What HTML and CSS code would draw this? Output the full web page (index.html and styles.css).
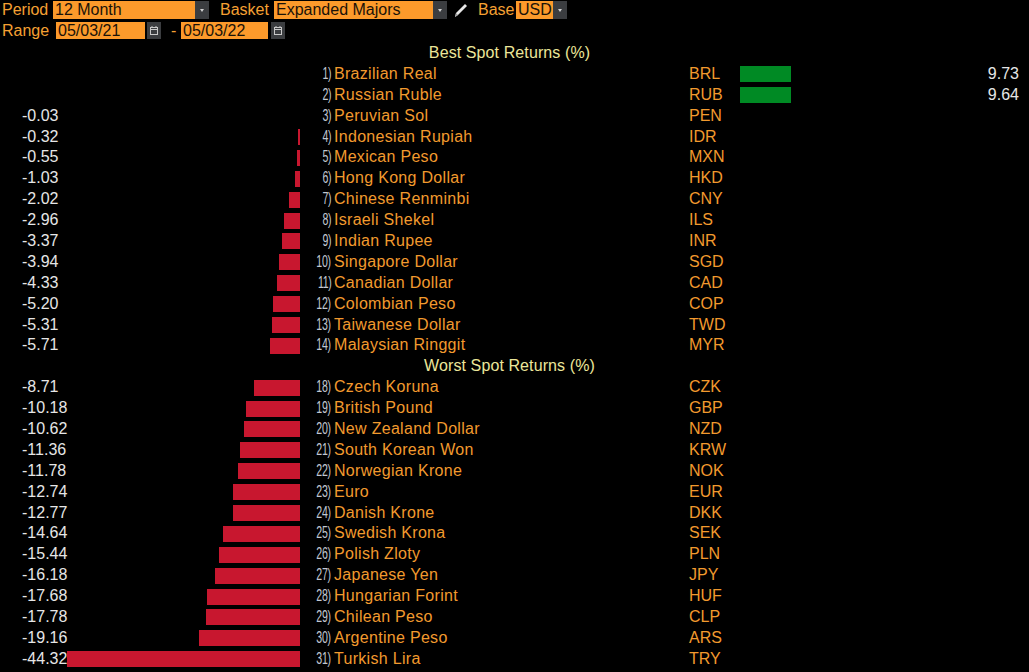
FILE: index.html
```html
<!DOCTYPE html>
<html lang="en">
<head>
<meta charset="utf-8">
<title>Spot Returns</title>
<link rel="stylesheet" href="styles.css">
</head>
<body>
<div class="toolbar">
  <div class="tb-row tb-row1">
    <span class="lbl lbl-period">Period</span>
    <span class="field f-period">12 Month</span>
    <span class="btn"><svg viewBox="0 0 14 18" width="14" height="18"><path d="M5 8 L9 8 L7 11 Z" fill="#d0d0d0"/></svg></span>
    <span class="lbl lbl-basket">Basket</span>
    <span class="field f-basket">Expanded Majors</span>
    <span class="btn"><svg viewBox="0 0 14 18" width="14" height="18"><path d="M5 8 L9 8 L7 11 Z" fill="#d0d0d0"/></svg></span>
    <span class="pencil"><svg viewBox="0 0 16 18" width="16" height="18"><path d="M2 16 L3 12 L12 3 L14 5 L5 14 Z" fill="#e8e8e8"/><path d="M2 16 L3 12 L5 14 Z" fill="#a0a0a0"/></svg></span>
    <span class="lbl lbl-base">Base</span>
    <span class="field f-base">USD</span>
    <span class="btn"><svg viewBox="0 0 14 18" width="14" height="18"><path d="M5 8 L9 8 L7 11 Z" fill="#d0d0d0"/></svg></span>
  </div>
  <div class="tb-row tb-row2">
    <span class="lbl lbl-range">Range</span>
    <span class="field f-date1">05/03/21</span>
    <span class="btn cal"><svg viewBox="0 0 14 17" width="14" height="17"><rect x="3.5" y="5.5" width="7" height="7" fill="none" stroke="#c8c8c8"/><path d="M3.5 7.5 H10.5" stroke="#c8c8c8"/><path d="M5 4 V6 M9 4 V6" stroke="#c8c8c8"/></svg></span>
    <span class="dash">-</span>
    <span class="field f-date2">05/03/22</span>
    <span class="btn cal"><svg viewBox="0 0 14 17" width="14" height="17"><rect x="3.5" y="5.5" width="7" height="7" fill="none" stroke="#c8c8c8"/><path d="M3.5 7.5 H10.5" stroke="#c8c8c8"/><path d="M5 4 V6 M9 4 V6" stroke="#c8c8c8"/></svg></span>
  </div>
</div>

<div class="table">
  <div class="section">Best Spot Returns (%)</div>

  <div class="c-neg"></div><div class="rank"><span>1)</span></div><div class="name">Brazilian Real</div><div class="code">BRL</div><div class="c-pos"><span class="bar-pos" style="width:51px"></span></div><div class="val-pos">9.73</div>
  <div class="c-neg"></div><div class="rank"><span>2)</span></div><div class="name">Russian Ruble</div><div class="code">RUB</div><div class="c-pos"><span class="bar-pos" style="width:51px"></span></div><div class="val-pos">9.64</div>
  <div class="c-neg"><span class="val-neg">-0.03</span><span class="bar-neg" style="width:0px"></span></div><div class="rank"><span>3)</span></div><div class="name">Peruvian Sol</div><div class="code">PEN</div><div class="c-pos"></div><div class="val-pos"></div>
  <div class="c-neg"><span class="val-neg">-0.32</span><span class="bar-neg" style="width:2px"></span></div><div class="rank"><span>4)</span></div><div class="name">Indonesian Rupiah</div><div class="code">IDR</div><div class="c-pos"></div><div class="val-pos"></div>
  <div class="c-neg"><span class="val-neg">-0.55</span><span class="bar-neg" style="width:3px"></span></div><div class="rank"><span>5)</span></div><div class="name">Mexican Peso</div><div class="code">MXN</div><div class="c-pos"></div><div class="val-pos"></div>
  <div class="c-neg"><span class="val-neg">-1.03</span><span class="bar-neg" style="width:5px"></span></div><div class="rank"><span>6)</span></div><div class="name">Hong Kong Dollar</div><div class="code">HKD</div><div class="c-pos"></div><div class="val-pos"></div>
  <div class="c-neg"><span class="val-neg">-2.02</span><span class="bar-neg" style="width:11px"></span></div><div class="rank"><span>7)</span></div><div class="name">Chinese Renminbi</div><div class="code">CNY</div><div class="c-pos"></div><div class="val-pos"></div>
  <div class="c-neg"><span class="val-neg">-2.96</span><span class="bar-neg" style="width:16px"></span></div><div class="rank"><span>8)</span></div><div class="name">Israeli Shekel</div><div class="code">ILS</div><div class="c-pos"></div><div class="val-pos"></div>
  <div class="c-neg"><span class="val-neg">-3.37</span><span class="bar-neg" style="width:18px"></span></div><div class="rank"><span>9)</span></div><div class="name">Indian Rupee</div><div class="code">INR</div><div class="c-pos"></div><div class="val-pos"></div>
  <div class="c-neg"><span class="val-neg">-3.94</span><span class="bar-neg" style="width:21px"></span></div><div class="rank"><span>10)</span></div><div class="name">Singapore Dollar</div><div class="code">SGD</div><div class="c-pos"></div><div class="val-pos"></div>
  <div class="c-neg"><span class="val-neg">-4.33</span><span class="bar-neg" style="width:23px"></span></div><div class="rank"><span>11)</span></div><div class="name">Canadian Dollar</div><div class="code">CAD</div><div class="c-pos"></div><div class="val-pos"></div>
  <div class="c-neg"><span class="val-neg">-5.20</span><span class="bar-neg" style="width:27px"></span></div><div class="rank"><span>12)</span></div><div class="name">Colombian Peso</div><div class="code">COP</div><div class="c-pos"></div><div class="val-pos"></div>
  <div class="c-neg"><span class="val-neg">-5.31</span><span class="bar-neg" style="width:28px"></span></div><div class="rank"><span>13)</span></div><div class="name">Taiwanese Dollar</div><div class="code">TWD</div><div class="c-pos"></div><div class="val-pos"></div>
  <div class="c-neg"><span class="val-neg">-5.71</span><span class="bar-neg" style="width:30px"></span></div><div class="rank"><span>14)</span></div><div class="name">Malaysian Ringgit</div><div class="code">MYR</div><div class="c-pos"></div><div class="val-pos"></div>

  <div class="section">Worst Spot Returns (%)</div>

  <div class="c-neg"><span class="val-neg">-8.71</span><span class="bar-neg" style="width:46px"></span></div><div class="rank"><span>18)</span></div><div class="name">Czech Koruna</div><div class="code">CZK</div><div class="c-pos"></div><div class="val-pos"></div>
  <div class="c-neg"><span class="val-neg">-10.18</span><span class="bar-neg" style="width:54px"></span></div><div class="rank"><span>19)</span></div><div class="name">British Pound</div><div class="code">GBP</div><div class="c-pos"></div><div class="val-pos"></div>
  <div class="c-neg"><span class="val-neg">-10.62</span><span class="bar-neg" style="width:56px"></span></div><div class="rank"><span>20)</span></div><div class="name">New Zealand Dollar</div><div class="code">NZD</div><div class="c-pos"></div><div class="val-pos"></div>
  <div class="c-neg"><span class="val-neg">-11.36</span><span class="bar-neg" style="width:60px"></span></div><div class="rank"><span>21)</span></div><div class="name">South Korean Won</div><div class="code">KRW</div><div class="c-pos"></div><div class="val-pos"></div>
  <div class="c-neg"><span class="val-neg">-11.78</span><span class="bar-neg" style="width:62px"></span></div><div class="rank"><span>22)</span></div><div class="name">Norwegian Krone</div><div class="code">NOK</div><div class="c-pos"></div><div class="val-pos"></div>
  <div class="c-neg"><span class="val-neg">-12.74</span><span class="bar-neg" style="width:67px"></span></div><div class="rank"><span>23)</span></div><div class="name">Euro</div><div class="code">EUR</div><div class="c-pos"></div><div class="val-pos"></div>
  <div class="c-neg"><span class="val-neg">-12.77</span><span class="bar-neg" style="width:67px"></span></div><div class="rank"><span>24)</span></div><div class="name">Danish Krone</div><div class="code">DKK</div><div class="c-pos"></div><div class="val-pos"></div>
  <div class="c-neg"><span class="val-neg">-14.64</span><span class="bar-neg" style="width:77px"></span></div><div class="rank"><span>25)</span></div><div class="name">Swedish Krona</div><div class="code">SEK</div><div class="c-pos"></div><div class="val-pos"></div>
  <div class="c-neg"><span class="val-neg">-15.44</span><span class="bar-neg" style="width:81px"></span></div><div class="rank"><span>26)</span></div><div class="name">Polish Zloty</div><div class="code">PLN</div><div class="c-pos"></div><div class="val-pos"></div>
  <div class="c-neg"><span class="val-neg">-16.18</span><span class="bar-neg" style="width:85px"></span></div><div class="rank"><span>27)</span></div><div class="name">Japanese Yen</div><div class="code">JPY</div><div class="c-pos"></div><div class="val-pos"></div>
  <div class="c-neg"><span class="val-neg">-17.68</span><span class="bar-neg" style="width:93px"></span></div><div class="rank"><span>28)</span></div><div class="name">Hungarian Forint</div><div class="code">HUF</div><div class="c-pos"></div><div class="val-pos"></div>
  <div class="c-neg"><span class="val-neg">-17.78</span><span class="bar-neg" style="width:94px"></span></div><div class="rank"><span>29)</span></div><div class="name">Chilean Peso</div><div class="code">CLP</div><div class="c-pos"></div><div class="val-pos"></div>
  <div class="c-neg"><span class="val-neg">-19.16</span><span class="bar-neg" style="width:101px"></span></div><div class="rank"><span>30)</span></div><div class="name">Argentine Peso</div><div class="code">ARS</div><div class="c-pos"></div><div class="val-pos"></div>
  <div class="c-neg"><span class="val-neg">-44.32</span><span class="bar-neg" style="width:233px"></span></div><div class="rank"><span>31)</span></div><div class="name">Turkish Lira</div><div class="code">TRY</div><div class="c-pos"></div><div class="val-pos"></div>
</div>
</body>
</html>
```

FILE: styles.css
```css
html, body {
  margin: 0;
  padding: 0;
  background: #000;
}
body {
  width: 1029px;
  height: 672px;
  overflow: hidden;
  font-family: "Liberation Sans", Arial, sans-serif;
  font-size: 16px;
  color: #f29a2e;
}

/* ---------- toolbar ---------- */
.toolbar {
  padding-top: 1px;
  height: 42.5px;
  box-sizing: border-box;
}
.tb-row {
  display: flex;
  align-items: center;
}
.tb-row1 { height: 18px; }
.tb-row2 { height: 17px; margin-top: 3px; }

.lbl {
  color: #f5a033;
  line-height: 18px;
  white-space: nowrap;
}
.lbl-period { padding-left: 2px; width: 51px; }
.lbl-range  { padding-left: 2px; width: 54px; }
.lbl-basket { margin-left: 11px; width: 54px; }
.lbl-base   { margin-left: 9px; width: 38px; }

.field {
  background: #fc9a2b;
  color: #1a1208;
  height: 100%;
  line-height: 18px;
  padding-left: 2px;
  box-sizing: border-box;
  white-space: nowrap;
  overflow: hidden;
}
.f-period { width: 142px; }
.f-basket { width: 159px; }
.f-base   { width: 37px; }
.f-date1  { width: 89px; line-height: 17px; }
.f-date2  { width: 87px; line-height: 17px; }

.btn {
  display: block;
  width: 14px;
  height: 100%;
  background: #3b3d40;
}
.btn svg { display: block; }
.cal { margin-left: 2px; }
.f-date2 + .cal { margin-left: 3px; }

.dash {
  color: #f5a033;
  margin-left: 10px;
  width: 10px;
  line-height: 17px;
}
.pencil {
  display: block;
  margin-left: 6px;
  width: 16px;
  height: 18px;
}
.pencil svg { display: block; }

/* ---------- table ---------- */
.table {
  display: grid;
  grid-template-columns: 300px 32px 357px 51px 1fr auto;
  grid-auto-rows: 20.9px;
  padding-right: 10px;
  align-items: center;
}
.section {
  grid-column: 1 / -1;
  text-align: center;
  color: #ece69a;
  letter-spacing: 0.1px;
}

.c-neg {
  display: grid;
  height: 100%;
  align-items: center;
}
.val-neg {
  grid-area: 1 / 1;
  justify-self: start;
  padding-left: 22px;
  color: #e6e6e6;
  position: relative;
  z-index: 1;
}
.bar-neg {
  grid-area: 1 / 1;
  justify-self: end;
  height: 16px;
  margin-top: 1px;
  background: #c8172f;
}

.rank {
  text-align: right;
  padding-right: 1px;
  line-height: 18px;
}
.rank span {
  display: inline-block;
  font-size: 16px;
  letter-spacing: -0.5px;
  color: #c2c8d2;
  transform: scaleX(0.66);
  transform-origin: right center;
}
.name {
  padding-left: 2px;
  color: #f29a2e;
  letter-spacing: 0.3px;
  white-space: nowrap;
}
.code {
  color: #f29a2e;
}
.c-pos {
  display: flex;
  align-items: center;
  height: 100%;
}
.bar-pos {
  display: block;
  height: 16px;
  margin-top: 1px;
  background: #008a24;
}
.val-pos {
  text-align: right;
  color: #e6e6e6;
}
```
